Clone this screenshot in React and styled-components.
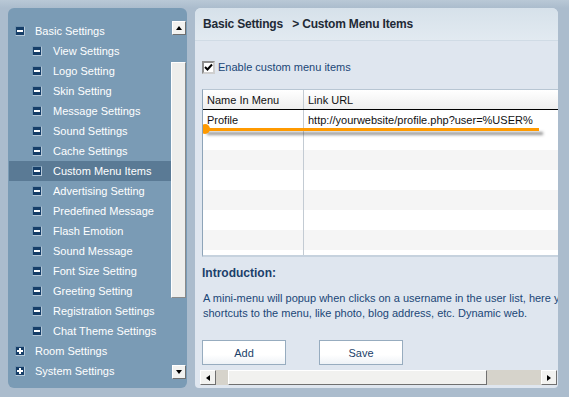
import React from "react";
import styled, { createGlobalStyle } from "styled-components";

const GlobalStyle = createGlobalStyle`
  html, body {
    margin: 0;
    padding: 0;
    background: #abbccd;
  }
  body {
    font-family: "Liberation Sans", Arial, sans-serif;
    font-size: 11px;
  }
`;

const Page = styled.div`
  display: flex;
  gap: 8px;
  width: 569px;
  height: 397px;
  box-sizing: border-box;
  padding: 8px 11px 9px 8px;
  background: linear-gradient(#b9c8d6 0, #abbccd 8px);
`;

const Sidebar = styled.div`
  width: 179px;
  flex-shrink: 0;
  display: flex;
  background: #7a9bb5;
  border-radius: 6px;
  box-sizing: border-box;
  padding: 13px 1px 9px 1px;
`;

const Tree = styled.ul`
  flex: 1;
  list-style: none;
  margin: 0;
  padding: 0;
`;

const Item = styled.li`
  display: flex;
  align-items: center;
  height: 20px;
  padding-left: ${(p) => (p.$sub ? 23 : 6)}px;
  gap: ${(p) => (p.$sub ? 11 : 10)}px;
  color: #ffffff;
  font-size: 11px;
  background: ${(p) => (p.$active ? "#5a7a95" : "transparent")};
`;

const Toggle = styled.span`
  position: relative;
  width: 8px;
  height: 8px;
  background: #163e68;
  border: 1px solid #6f91ad;
  border-right-color: #b5c8d8;
  border-bottom-color: #b5c8d8;
  flex-shrink: 0;
  &::before {
    content: "";
    position: absolute;
    left: 1px;
    top: 3px;
    width: 6px;
    height: 2px;
    background: #ffffff;
  }
  &::after {
    content: "";
    position: absolute;
    left: 3px;
    top: 1px;
    width: 2px;
    height: 6px;
    background: #ffffff;
    display: ${(p) => (p.$plus ? "block" : "none")};
  }
`;

const VScroll = styled.div`
  width: 15px;
  display: flex;
  flex-direction: column;
  align-items: center;
`;

const ArrowBtn = styled.div`
  width: 14px;
  height: 14px;
  box-sizing: border-box;
  background: #f2f2f0;
  border: 1px solid #ffffff;
  border-right-color: #6f6f6f;
  border-bottom-color: #6f6f6f;
  display: flex;
  align-items: center;
  justify-content: center;
  flex-shrink: 0;
  &::after {
    content: "";
    border-left: 3px solid transparent;
    border-right: 3px solid transparent;
    ${(p) =>
      p.$dir === "up"
        ? "border-bottom: 4px solid #000;"
        : p.$dir === "down"
        ? "border-top: 4px solid #000;"
        : ""}
  }
`;

const HArrowBtn = styled(ArrowBtn)`
  width: 16px;
  height: 15px;
  &::after {
    border: none;
    border-top: 3px solid transparent;
    border-bottom: 3px solid transparent;
    ${(p) =>
      p.$dir === "left"
        ? "border-right: 4px solid #000;"
        : "border-left: 4px solid #000;"}
  }
`;

const VThumb = styled.div`
  margin-top: 27px;
  width: 15px;
  height: 236px;
  box-sizing: border-box;
  background: #eeeeec;
  border: 1px solid #ffffff;
  border-right-color: #8a8a8a;
  border-bottom-color: #8a8a8a;
`;

const Spacer = styled.div`
  flex: 1;
`;

const Main = styled.div`
  flex: 1;
  min-width: 0;
  display: flex;
  flex-direction: column;
  background: #dfe6ef;
  border-radius: 6px 6px 4px 4px;
  overflow: hidden;
  padding-bottom: 3px;
`;

const Header = styled.div`
  height: 32px;
  flex-shrink: 0;
  display: flex;
  align-items: center;
  padding-left: 8px;
  font-size: 12px;
  font-weight: bold;
  letter-spacing: -0.2px;
  color: #1f2a36;
  background: linear-gradient(#d6e1ea, #e2eaf1);
  border-bottom: 1px solid #d0dbe5;
  white-space: pre;
`;

const Content = styled.div`
  flex: 1;
  overflow: hidden;
  padding: 19px 0 0 7px;
`;

const Inner = styled.div`
  width: 520px;
`;

const CheckRow = styled.label`
  display: flex;
  align-items: center;
  gap: 3px;
  color: #1b4777;
  font-size: 11px;
  height: 14px;
`;

const Check = styled.span`
  width: 13px;
  height: 13px;
  box-sizing: border-box;
  background: #ffffff;
  border: 2px solid #8d8d8d;
  border-right-color: #cfcfcf;
  border-bottom-color: #cfcfcf;
  display: flex;
  align-items: center;
  justify-content: center;
`;

const Table = styled.div`
  position: relative;
  margin-top: 15px;
  height: 168px;
  box-sizing: border-box;
  border-left: 1px solid #8ea4b8;
  border-top: 1px solid #b8c6d3;
  border-bottom: 2px solid #c6d2de;
  overflow: hidden;
`;

const Row = styled.div`
  display: grid;
  grid-template-columns: 100px 1fr;
  height: 20px;
  background: ${(p) => (p.$shade ? "#f5f5f5" : "#ffffff")};
  ${(p) =>
    p.$head &&
    `background: linear-gradient(#ffffff, #eeeeee); border-bottom: 1px solid #000; height: 19px;`}
`;

const Cell = styled.div`
  display: flex;
  align-items: center;
  padding-left: 4px;
  color: #111;
  font-size: 11px;
  border-left: ${(p) => (p.$first ? "none" : "1px solid #c3cbd3")};
  white-space: nowrap;
`;

const Marker = styled.div`
  position: absolute;
  left: 0;
  top: 38px;
  width: 336px;
  height: 3px;
  background: #ff9a00;
  box-shadow: 4px 4px 3px rgba(60, 60, 60, 0.55);
  &::before {
    content: "";
    position: absolute;
    left: -3px;
    top: -4px;
    width: 10px;
    height: 10px;
    border-radius: 50%;
    background: #ff9a00;
  }
`;

const Intro = styled.div`
  margin-top: 9px;
  font-size: 12px;
  font-weight: bold;
  color: #1b3f6a;
`;

const Para = styled.p`
  margin: 11px 0 0 1px;
  font-size: 11px;
  line-height: 15px;
  color: #1b4777;
  white-space: nowrap;
`;

const Buttons = styled.div`
  display: flex;
  gap: 33px;
  margin-top: 19px;
`;

const Button = styled.button`
  width: 84px;
  height: 25px;
  background: linear-gradient(#ffffff 60%, #eef2f6);
  border: 1px solid #97acbf;
  color: #1b3f6a;
  font-family: "Liberation Sans", Arial, sans-serif;
  font-size: 11px;
  padding: 0;
`;

const HScroll = styled.div`
  display: flex;
  height: 15px;
  margin: 0 1px 0 5px;
  background: #d6d3cb;
`;

const HThumb = styled.div`
  margin-left: 12px;
  width: 259px;
  box-sizing: border-box;
  background: #f1f1ef;
  border: 1px solid #ffffff;
  border-right-color: #707070;
  border-bottom-color: #707070;
`;

const tree = [
  { label: "Basic Settings", top: true },
  { label: "View Settings" },
  { label: "Logo Setting" },
  { label: "Skin Setting" },
  { label: "Message Settings" },
  { label: "Sound Settings" },
  { label: "Cache Settings" },
  { label: "Custom Menu Items", active: true },
  { label: "Advertising Setting" },
  { label: "Predefined Message" },
  { label: "Flash Emotion" },
  { label: "Sound Message" },
  { label: "Font Size Setting" },
  { label: "Greeting Setting" },
  { label: "Registration Settings" },
  { label: "Chat Theme Settings" },
  { label: "Room Settings", top: true, plus: true },
  { label: "System Settings", top: true, plus: true },
];

const App = () => {
  const blankRows = [1, 2, 3, 4, 5, 6, 7];
  return (
    <Page>
      <GlobalStyle />
      <Sidebar>
        <Tree>
          {tree.map((it) => (
            <Item key={it.label} $sub={!it.top} $active={it.active}>
              <Toggle $plus={it.plus} />
              {it.label}
            </Item>
          ))}
        </Tree>
        <VScroll>
          <ArrowBtn $dir="up" />
          <VThumb />
          <Spacer />
          <ArrowBtn $dir="down" />
        </VScroll>
      </Sidebar>
      <Main>
        <Header>Basic Settings   &gt; Custom Menu Items</Header>
        <Content>
          <Inner>
            <CheckRow>
              <Check>
                <svg width="9" height="9" viewBox="0 0 9 9">
                  <path d="M1 4 L3.5 6.5 L8 1.5" stroke="#000" strokeWidth="2" fill="none" />
                </svg>
              </Check>
              Enable custom menu items
            </CheckRow>
            <Table>
              <Row $head>
                <Cell $first>Name In Menu</Cell>
                <Cell>Link URL</Cell>
              </Row>
              <Row>
                <Cell $first>Profile</Cell>
                <Cell>http://yourwebsite/profile.php?user=%USER%</Cell>
              </Row>
              {blankRows.map((n) => (
                <Row key={n} $shade={n % 2 === 0}>
                  <Cell $first />
                  <Cell />
                </Row>
              ))}
              <Marker />
            </Table>
            <Intro>Introduction:</Intro>
            <Para>
              A mini-menu will popup when clicks on a username in the user list, here you can add
              <br />
              shortcuts to the menu, like photo, blog address, etc. Dynamic web.
            </Para>
            <Buttons>
              <Button>Add</Button>
              <Button>Save</Button>
            </Buttons>
          </Inner>
        </Content>
        <HScroll>
          <HArrowBtn $dir="left" />
          <HThumb />
          <Spacer />
          <HArrowBtn $dir="right" />
        </HScroll>
      </Main>
    </Page>
  );
};

export default App;
